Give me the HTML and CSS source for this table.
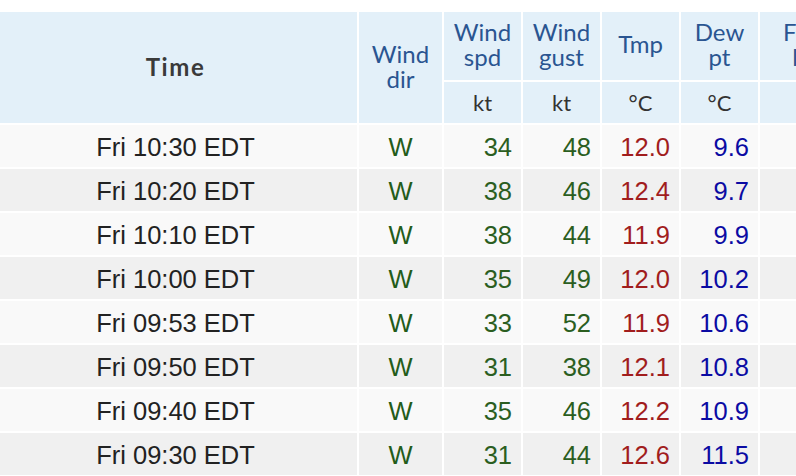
FILE: index.html
```html
<!DOCTYPE html>
<html>
<head>
<meta charset="utf-8">
<link rel="stylesheet" href="styles.css">
</head>
<body>
<div class="wrap">
<table class="obs">
  <colgroup>
    <col class="c-time">
    <col class="c-dir">
    <col class="c-num">
    <col class="c-num">
    <col class="c-num">
    <col class="c-num">
    <col class="c-feel">
  </colgroup>
  <thead>
    <tr class="h1">
      <th rowspan="2" class="time-h">Time</th>
      <th rowspan="2" class="dir-h">Wind<br>dir</th>
      <th>Wind<br>spd</th>
      <th>Wind<br>gust</th>
      <th>Tmp</th>
      <th>Dew<br>pt</th>
      <th>Feels<br>like</th>
    </tr>
    <tr class="h2">
      <th class="unit">kt</th>
      <th class="unit">kt</th>
      <th class="unit">°C</th>
      <th class="unit">°C</th>
      <th class="unit"></th>
    </tr>
  </thead>
  <tbody>
    <tr><td class="t">Fri 10:30 EDT</td><td class="d">W</td><td class="g">34</td><td class="g">48</td><td class="r">12.0</td><td class="b">9.6</td><td></td></tr>
    <tr><td class="t">Fri 10:20 EDT</td><td class="d">W</td><td class="g">38</td><td class="g">46</td><td class="r">12.4</td><td class="b">9.7</td><td></td></tr>
    <tr><td class="t">Fri 10:10 EDT</td><td class="d">W</td><td class="g">38</td><td class="g">44</td><td class="r">11.9</td><td class="b">9.9</td><td></td></tr>
    <tr><td class="t">Fri 10:00 EDT</td><td class="d">W</td><td class="g">35</td><td class="g">49</td><td class="r">12.0</td><td class="b">10.2</td><td></td></tr>
    <tr><td class="t">Fri 09:53 EDT</td><td class="d">W</td><td class="g">33</td><td class="g">52</td><td class="r">11.9</td><td class="b">10.6</td><td></td></tr>
    <tr><td class="t">Fri 09:50 EDT</td><td class="d">W</td><td class="g">31</td><td class="g">38</td><td class="r">12.1</td><td class="b">10.8</td><td></td></tr>
    <tr><td class="t">Fri 09:40 EDT</td><td class="d">W</td><td class="g">35</td><td class="g">46</td><td class="r">12.2</td><td class="b">10.9</td><td></td></tr>
    <tr><td class="t">Fri 09:30 EDT</td><td class="d">W</td><td class="g">31</td><td class="g">44</td><td class="r">12.6</td><td class="b">11.5</td><td></td></tr>
  </tbody>
</table>
</div>
</body>
</html>
```
FILE: styles.css
```css
html, body {
  margin: 0;
  padding: 0;
  background: #ffffff;
  overflow: hidden;
}
.wrap {
  width: 796px;
  height: 476px;
  overflow: hidden;
}
.obs {
  border-collapse: separate;
  border-spacing: 2px;
  table-layout: fixed;
  width: 863px;
  margin: 10px 0 0 -2px;
  font-family: "Liberation Sans", Arial, sans-serif;
}
.c-time { width: 357px; }
.c-dir { width: 83px; }
.c-num { width: 77px; }
.c-feel { width: 100px; }

.obs th {
  background: #e3f0f9;
  font-family: "Lato", "Open Sans", sans-serif;
  font-weight: 400;
  font-size: 24px;
  line-height: 25px;
  color: #2a5591;
  padding: 0;
  text-align: center;
  vertical-align: middle;
}
.h1 th {
  height: 68px;
  padding-bottom: 5px;
  box-sizing: border-box;
}
.h2 th { height: 41px; }
.obs th.dir-h { padding-bottom: 4px; }
.obs th.time-h {
  font-weight: 700;
  font-size: 24px;
  letter-spacing: 1.6px;
  color: #3a3a3a;
  padding: 0 6px 2px 0;
}
.obs td {
  box-sizing: border-box;
  height: 42px;
  padding: 2px 9px 0 0;
  font-size: 25.5px;
  line-height: 30px;
  text-align: right;
  vertical-align: middle;
}
.obs th.unit {
  color: #333333;
  font-size: 22px;
}
.obs tbody tr:nth-child(odd) td { background: #f9f9f9; }
.obs tbody tr:nth-child(even) td { background: #f0f0f0; }
.obs td.t {
  text-align: center;
  padding: 2px 6px 0 0;
  color: #222222;
}
.obs td.d {
  text-align: center;
  padding: 2px 0 0 0;
  color: #235c1a;
}
.obs td.g { color: #2b5e1f; }
.obs td.r { color: #a11d1d; }
.obs td.b { color: #0b0ba3; }
```
